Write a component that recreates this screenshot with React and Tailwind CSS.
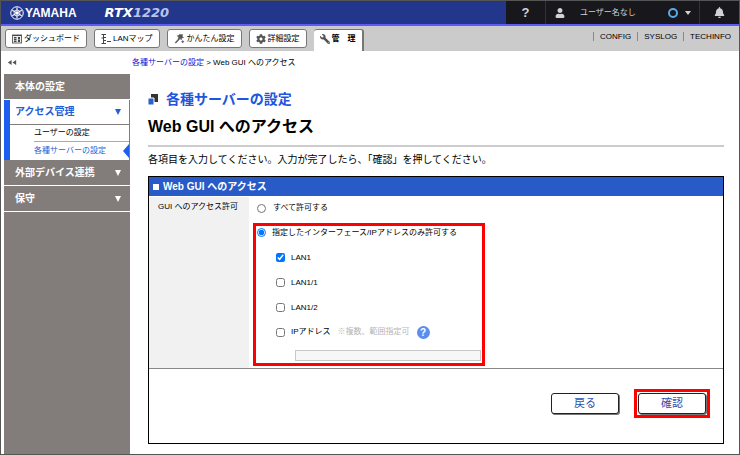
import React, { useState } from "react";
import { FaCog, FaWrench, FaUser, FaBell } from "react-icons/fa";

function YamahaMark() {
  return (
    <svg viewBox="0 0 28 28" className="size-[14px]" fill="none" stroke="white">
      <circle cx="14" cy="14" r="12.5" strokeWidth="2" />
      <path
        d="M14 3v22M4.500 8.500l19 11M4.500 19.500l19-11"
        strokeWidth="2.200"
      />
      <circle cx="14" cy="14" r="6" strokeWidth="1.500" />
      <circle cx="14" cy="14" r="2" fill="white" />
    </svg>
  );
}

function DashboardIcon() {
  return (
    <svg viewBox="0 0 20 20" className="h-[10px] w-[10px]" fill="none">
      <rect x="1" y="2" width="18" height="16" fill="#eee" stroke="#666" strokeWidth="2" />
      <path d="M1 3h18" stroke="#444" strokeWidth="2" />
      <path d="M4 6h5v3H4zM4 10h5v3H4zM4 14h5v2H4zM12 6h4v5h-4zM12 12h4v4h-4z" fill="#444" />
    </svg>
  );
}

function LanIcon() {
  return (
    <svg viewBox="0 0 20 24" className="h-[12px] w-[10px]" stroke="#444" strokeWidth="2" fill="none">
      <path d="M1 3h9M5 3v18M1 10h4M5 9h5M1 21h9M5 15h5M12 17h8" />
    </svg>
  );
}

function WandIcon() {
  return (
    <svg viewBox="0 0 24 24" className="h-[11px] w-[11px]" stroke="#555" fill="#555">
      <path d="M12 12L3 22" strokeWidth="3" />
      <path d="M13 2l2 2 4-1-1 4 3 3-4 1-1 4-3-3-4 1 1-4-3-3 4-1z" />
      <path d="M19 16v6M16 19h6" strokeWidth="2" />
    </svg>
  );
}

const tabs = [
  { label: "ダッシュボード", icon: <DashboardIcon /> },
  { label: "LANマップ", icon: <LanIcon /> },
  { label: "かんたん設定", icon: <WandIcon /> },
  { label: "詳細設定", icon: <FaCog size={10} color="#555" /> },
];

function Header() {
  return (
    <header className="flex h-[25px] border-b-2 border-[#5b5bf5] bg-[#22368b] text-white">
      <div className="flex flex-1 items-center pl-[9px]">
        <YamahaMark />
        <span className="ml-px text-[12px] leading-none font-bold">YAMAHA</span>
        <span className="ml-[28px] font-['DejaVu_Sans'] text-[13px] leading-none font-bold italic">
          RTX<span className="text-[#b9c4ea]">1220</span>
        </span>
      </div>
      <div className="flex items-center bg-[#18181c] text-[#d0d2d6]">
        <button type="button" aria-label="ヘルプ" className="h-full w-[39px] text-[13px] font-bold">
          ?
        </button>
        <div className="flex h-full w-[155px] items-center border-x border-[#333] pl-[9px]">
          <FaUser size={10} />
          <span className="ml-[15px]">ユーザー名なし</span>
          <span className="ml-[32px] size-[10px] rounded-full border-2 border-[#5aa9e8]" />
          <span className="ml-[7px] border-x-3 border-t-4 border-x-transparent border-t-[#d0d2d6]" />
        </div>
        <button type="button" aria-label="通知" className="flex h-full w-[39px] items-center justify-center">
          <FaBell size={11} />
        </button>
      </div>
    </header>
  );
}

function TabBar() {
  return (
    <nav className="flex h-[25px] items-end bg-[#cbcbcb] pl-[4px]">
      <div className="mb-[3px] flex gap-[7px]">
        {tabs.map((tab) => (
          <button
            key={tab.label}
            type="button"
            className="flex h-[19px] items-center gap-[2px] rounded-[3px] border border-[#777] bg-white px-[6px] whitespace-nowrap"
          >
            {tab.icon}
            {tab.label}
          </button>
        ))}
      </div>
      <button
        type="button"
        className="ml-[7px] flex h-[22px] items-center gap-[2px] rounded-t-[3px] border-t border-r-2 border-[#777] bg-white px-[6px] pb-[4px] font-bold whitespace-nowrap"
      >
        <FaWrench size={10} color="#555" className="-scale-x-100" />
        管　理
      </button>
      <div className="mb-[10px] ml-auto flex leading-[9px]">
        <a href="#config" className="border-l border-[#888] px-[6px]">CONFIG</a>
        <a href="#syslog" className="border-l border-[#888] px-[6px]">SYSLOG</a>
        <a href="#techinfo" className="border-l border-[#888] pr-[8px] pl-[6px]">TECHINFO</a>
      </div>
    </nav>
  );
}

function Arrow() {
  return <span className="border-x-3 border-t-6 border-x-transparent border-t-current" />;
}

function SideItem({ label, arrow = true }) {
  return (
    <a
      href="#menu"
      className="flex h-[26px] items-center justify-between border-b border-white pr-[9px] pl-[11px] text-[10px] font-bold text-white"
    >
      {label}
      {arrow && <Arrow />}
    </a>
  );
}

function Sidebar() {
  return (
    <aside className="ml-[3px] flex w-[126px] shrink-0 flex-col">
      <button type="button" aria-label="メニューを閉じる" className="flex h-[23px] items-center pl-[3px]">
        <svg viewBox="0 0 20 12" className="h-[5px] w-[10px]" fill="#555">
          <path d="M9 0v12L0 6zM20 0v12l-9-6z" />
        </svg>
      </button>
      <div className="flex-1 bg-[#827d7b]">
        <SideItem label="本体の設定" arrow={false} />
        <div className="border-r border-l-6 border-r-[#827d7b] border-l-[#1c5fee] bg-white">
          <a
            href="#access"
            className="flex h-[25px] items-center justify-between border-b border-[#827d7b] pr-[8px] pl-[5px] text-[10px] font-bold text-[#1f5fd8]"
          >
            アクセス管理
            <Arrow />
          </a>
          <a href="#user" className="ml-[24px] flex h-[17px] items-center border-b border-[#aaa]">
            ユーザーの設定
          </a>
          <a href="#server" className="ml-[24px] flex h-[18px] items-center justify-between text-[#1f5fd8]">
            各種サーバーの設定
            <span className="border-y-7 border-r-6 border-y-transparent border-r-[#1c5fee]" />
          </a>
        </div>
        <SideItem label="外部デバイス連携" />
        <SideItem label="保守" />
      </div>
    </aside>
  );
}

const boxClass = "m-0 size-[9px] shrink-0";

function AccessForm() {
  const [mode, setMode] = useState("limited");
  const [targets, setTargets] = useState({ LAN1: true });

  const toggle = (name) =>
    setTargets({ ...targets, [name]: !targets[name] });

  return (
    <form
      onSubmit={(e) => e.preventDefault()}
      className="mt-[8px] border border-black"
    >
      <h3 className="flex h-[19px] items-center gap-[4px] bg-[#285ac8] pl-[4px] text-[10px] font-bold text-white">
        <span className="size-[6px] bg-white" />
        Web GUI へのアクセス
      </h3>
      <div className="flex border-b border-[#888] pt-px">
        <div className="w-[100px] shrink-0 bg-[#f1f1f1] pt-[4px] pl-[9px] leading-[12px]">
          GUI へのアクセス許可
        </div>
        <div className="flex-1 pl-[4px]">
          <label className="flex h-[22px] items-center gap-[7px] pl-[4px]">
            <input
              type="radio"
              name="mode"
              checked={mode === "all"}
              onChange={() => setMode("all")}
              className={boxClass}
            />
            すべて許可する
          </label>
          <div className="mt-[4px] mb-[2px] w-[232px] border-3 border-[#f00]">
            <label className="flex h-[13px] items-center gap-[6px] pl-px">
              <input
                type="radio"
                name="mode"
                checked={mode === "limited"}
                onChange={() => setMode("limited")}
                className={boxClass}
              />
              指定したインターフェース/IPアドレスのみ許可する
            </label>
            <div className="mt-[6px] pl-[20px]">
              {["LAN1", "LAN1/1", "LAN1/2"].map((name) => (
                <label key={name} className="flex h-[25px] items-center gap-[6px]">
                  <input
                    type="checkbox"
                    checked={!!targets[name]}
                    onChange={() => toggle(name)}
                    className={boxClass}
                  />
                  {name}
                </label>
              ))}
              <div className="flex h-[24px] items-center">
                <label className="flex items-center gap-[6px]">
                  <input
                    type="checkbox"
                    checked={!!targets.ip}
                    onChange={() => toggle("ip")}
                    className={boxClass}
                  />
                  IPアドレス
                </label>
                <span className="ml-[7px] text-[#b5b5b5]">※複数、範囲指定可</span>
                <button
                  type="button"
                  aria-label="ヘルプ"
                  className="ml-[7px] size-[13px] rounded-full bg-[#5b8def] text-[10px] leading-[13px] font-bold text-white"
                >
                  ?
                </button>
              </div>
            </div>
            <input
              type="text"
              aria-label="IPアドレス"
              disabled={!targets.ip}
              className="mt-[6px] mb-[2px] ml-[39px] block h-[11px] w-[186px] border border-[#c8c8c8] bg-[#f7f7f7] px-[2px]"
            />
          </div>
        </div>
      </div>
      <div className="flex items-center justify-end gap-[15px] pt-[20px] pr-[13px] pb-[25px]">
        <button
          type="button"
          className="h-[21px] w-[68px] rounded-[3px] border border-[#222] bg-white text-[11px] leading-none text-[#2854b0] shadow-[1px_1px_0_#777]"
        >
          戻る
        </button>
        <div className="border-3 border-[#f00] p-px">
          <button
            type="submit"
            className="block h-[21px] w-[68px] rounded-[3px] border border-[#222] bg-white text-[11px] leading-none text-[#2854b0] shadow-[1px_1px_0_#777]"
          >
            確認
          </button>
        </div>
      </div>
    </form>
  );
}

export default function App() {
  return (
    <div className="flex min-h-screen flex-col border border-[#555] bg-white font-['Liberation_Sans','Noto_Sans_CJK_JP',sans-serif] text-[8px] leading-[12px] text-black">
      <Header />
      <TabBar />
      <div className="flex flex-1">
        <Sidebar />
        <main className="flex-1 pr-[15px]">
          <p className="mt-[6px] ml-[2px]">
            <a href="#server" className="text-[#1414d8]">各種サーバーの設定</a>
            <span> &gt; Web GUI へのアクセス</span>
          </p>
          <div className="ml-[18px]">
            <h1 className="mt-[20px] flex h-[20px] items-center gap-[8px] text-[14px] leading-[20px] font-bold text-[#2255dd]">
              <svg viewBox="0 0 10 11" className="h-[11px] w-[10px]">
                <path d="M3 0h7v8H3z" fill="#333" />
                <path d="M0 4h6v7H0z" fill="#2b5fd0" stroke="white" strokeWidth="1" />
              </svg>
              各種サーバーの設定
            </h1>
            <h2 className="mt-[6px] text-[16px] leading-[24px] font-bold">
              Web GUI へのアクセス
            </h2>
            <p className="mt-[6px] border-t-2 border-[#ccc] pt-[5px] text-[10px] leading-[16px]">
              各項目を入力してください。入力が完了したら、「確認」を押してください。
            </p>
            <AccessForm />
          </div>
        </main>
      </div>
    </div>
  );
}
